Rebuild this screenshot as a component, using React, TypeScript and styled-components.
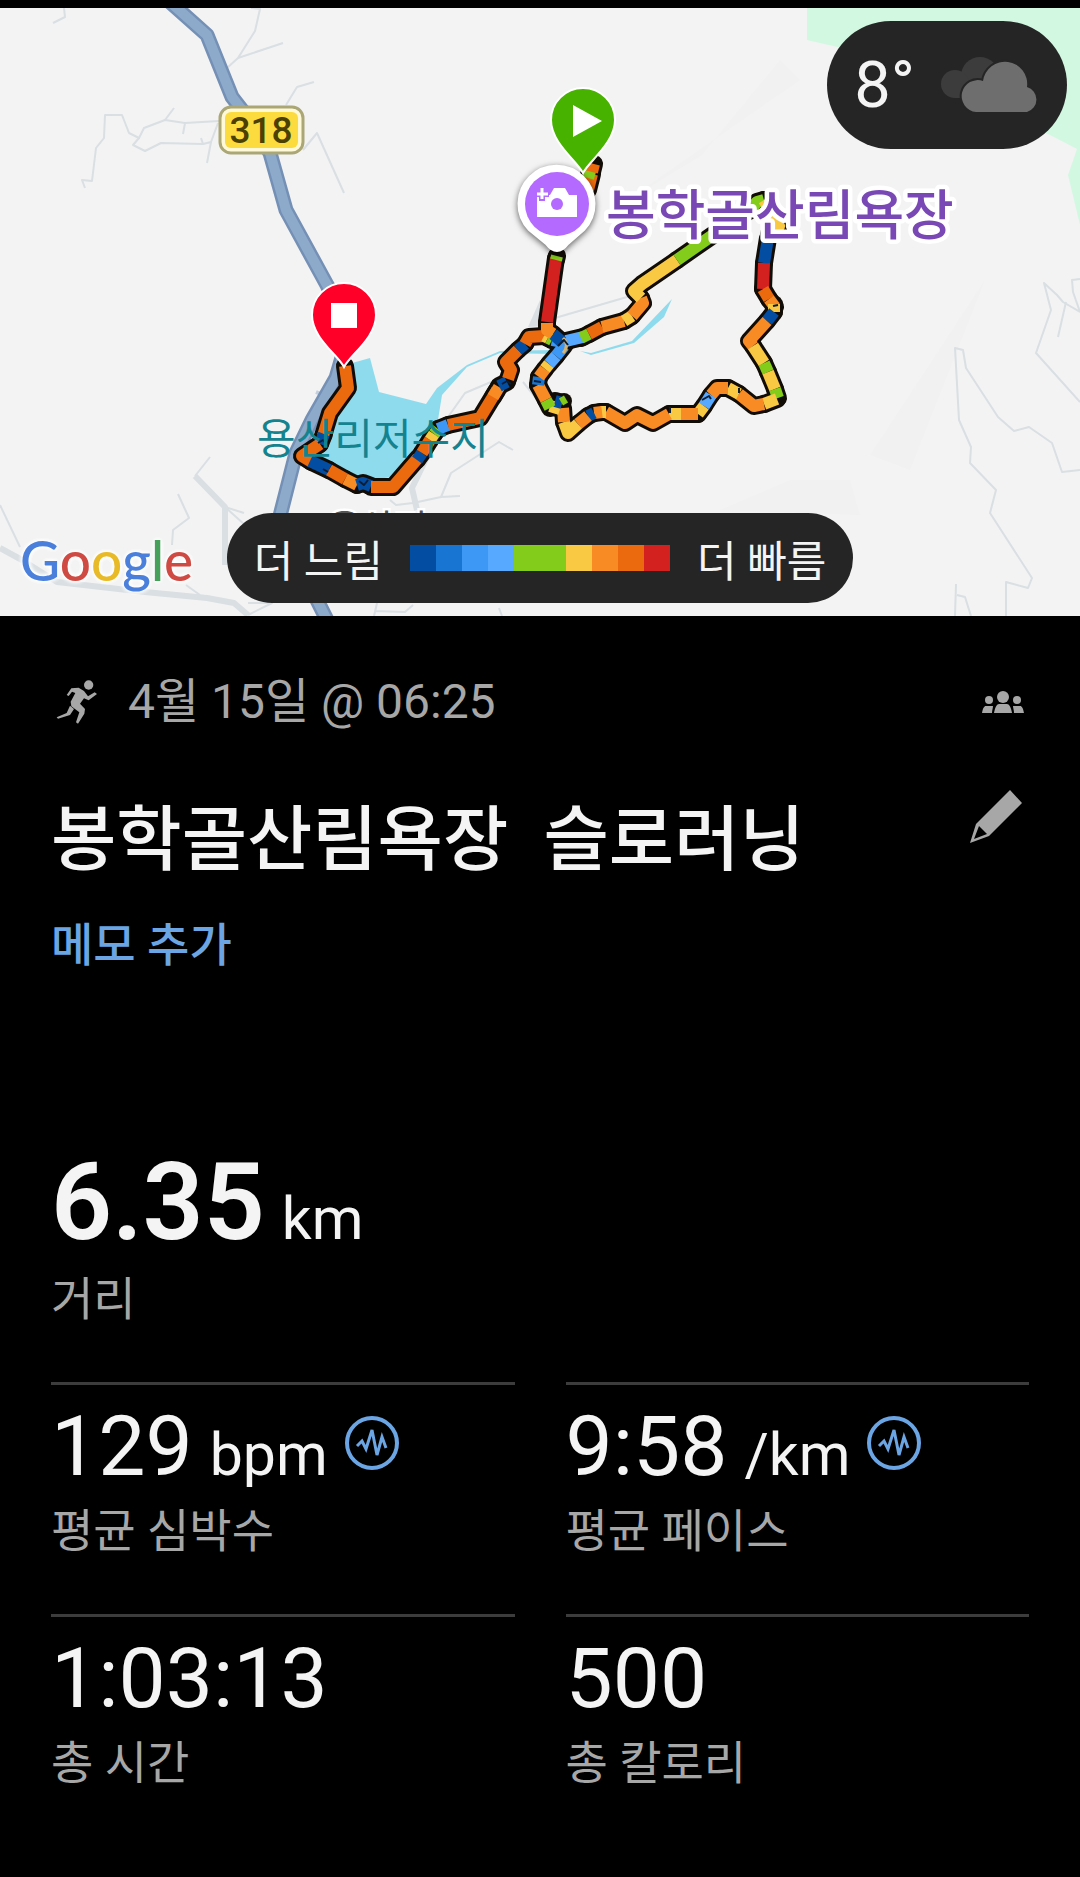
import React from 'react'
import styled, { createGlobalStyle } from 'styled-components'

type Point = [number, number]

interface IRoutePart {
  color: string
  points: Point[]
}

interface IStat {
  value: string
  unit?: string
  label: string
  chart?: boolean
}

const navy = '#034ea2'
const blue = '#1876d2'
const sky = '#3d97f5'
const light = '#57a9ff'
const green = '#84cc1c'
const yellow = '#fac943'
const orange = '#f98b24'
const deep = '#ec6a0e'
const red = '#d3211f'

const legendColors = [navy, blue, sky, light, green, green, yellow, orange, deep, red]

const stats: IStat[] = [
  { value: '129', unit: 'bpm', label: '평균 심박수', chart: true },
  { value: '9:58', unit: '/km', label: '평균 페이스', chart: true },
  { value: '1:03:13', label: '총 시간' },
  { value: '500', label: '총 칼로리' },
]

// small roads, thin
const lanes = [
  'M64 8L65 17L53 23',
  'M251 8L260 9L255 31L238 58L227 68',
  'M238 58L283 43',
  'M314 82L297 87L286 105',
  'M303 150L317 133L344 193',
  'M85 188L82 180L92 181L96 148L104 138L105 115L122 115L129 133L139 138L144 128L165 120L185 123L219 121',
  'M174 108L165 120',
  'M185 123L183 134',
  'M139 138L133 145L145 151L161 143L203 144L211 142',
  'M201 138L203 144',
  'M218 123L211 142L207 163',
  'M210 457L195 476',
  'M225 507L244 513',
  'M225 507L245 525',
  'M178 494L189 518L173 530L172 545',
  'M0 505L20 547',
  'M186 585L200 595',
  'M248 603L272 603L248 615',
  'M491 382L465 393L448 417',
  'M513 450L499 442L451 473L441 497L460 496',
  'M441 497L413 503L396 505L390 500',
  'M377 603L374 616M375 611L405 612L413 605',
  'M499 608L502 616',
  'M523 382L540 403',
  'M627 297L555 318',
  'M1080 470L1062 472L1052 443L1029 427L1014 431L998 417L966 368L963 350L955 348L959 420L971 447L970 463L996 490L990 513L1032 578L1028 588L1006 582L1006 616',
  'M956 584L955 616M957 595L965 597L971 616',
  'M1080 402L1036 353L1051 310L1044 283L1057 295L1063 302L1080 312',
  'M1080 279L1072 280L1073 292L1080 312',
  'M1058 337L1066 302',
]

// a bit wider ones
const streets = [
  'M195 476L225 507L225 565',
  'M0 548L22 560L57 582L145 592L207 598L234 603L248 615',
  'M427 457L412 488L417 510',
]

const highway = 'M170 2L207 35L232 97L256 128L270 153L286 210L327 285L350 330L336 378L312 420L296 453L280 516L302 570L328 622'

const route: IRoutePart[] = [
  { color: deep, points: [[345, 366], [348, 388], [330, 413], [323, 436]] },
  { color: navy, points: [[324, 434], [320, 444]] },
  { color: deep, points: [[320, 444], [302, 456], [312, 462]] },
  { color: navy, points: [[310, 461], [329, 470]] },
  { color: deep, points: [[329, 470], [345, 479]] },
  { color: orange, points: [[345, 479], [357, 485]] },
  { color: navy, points: [[357, 485], [363, 483], [371, 486]] },
  { color: deep, points: [[371, 487], [393, 487], [418, 458]] },
  { color: navy, points: [[417, 460], [422, 453]] },
  { color: deep, points: [[422, 453], [430, 440]] },
  { color: yellow, points: [[430, 440], [434, 434]] },
  { color: green, points: [[434, 434], [438, 429]] },
  { color: sky, points: [[438, 429], [448, 425]] },
  { color: deep, points: [[448, 425], [480, 418], [497, 390]] },
  { color: orange, points: [[493, 397], [499, 387]] },
  { color: navy, points: [[499, 386], [507, 382]] },
  { color: deep, points: [[508, 379], [511, 370], [506, 362], [518, 350]] },
  { color: navy, points: [[518, 350], [525, 344]] },
  { color: deep, points: [[525, 344], [529, 337], [544, 336]] },
  { color: yellow, points: [[544, 336], [548, 338]] },
  { color: green, points: [[548, 338], [552, 340]] },
  { color: sky, points: [[552, 340], [566, 343]] },
  { color: light, points: [[566, 341], [583, 337]] },
  { color: green, points: [[581, 338], [589, 334]] },
  { color: deep, points: [[589, 334], [602, 327]] },
  { color: orange, points: [[602, 327], [624, 321]] },
  { color: yellow, points: [[624, 321], [632, 316]] },
  { color: orange, points: [[632, 316], [643, 303], [641, 298]] },
  { color: yellow, points: [[641, 298], [634, 291], [642, 284], [677, 260]] },
  { color: green, points: [[677, 260], [713, 235], [750, 210], [757, 202], [764, 200]] },
  { color: yellow, points: [[764, 200], [772, 213], [779, 226], [769, 234]] },
  { color: navy, points: [[768, 238], [764, 263]] },
  { color: red, points: [[764, 263], [763, 289]] },
  { color: deep, points: [[763, 289], [769, 299]] },
  { color: orange, points: [[769, 299], [775, 307]] },
  { color: yellow, points: [[774, 304], [774, 312]] },
  { color: navy, points: [[774, 312], [767, 321]] },
  { color: orange, points: [[767, 321], [749, 341], [753, 346]] },
  { color: yellow, points: [[753, 346], [764, 363]] },
  { color: green, points: [[764, 363], [768, 372]] },
  { color: yellow, points: [[768, 372], [775, 389]] },
  { color: green, points: [[775, 389], [778, 398]] },
  { color: yellow, points: [[777, 399], [764, 404]] },
  { color: orange, points: [[764, 404], [754, 406], [739, 394]] },
  { color: yellow, points: [[739, 394], [728, 388]] },
  { color: orange, points: [[728, 388], [717, 388], [711, 395]] },
  { color: light, points: [[711, 395], [704, 406]] },
  { color: yellow, points: [[704, 406], [698, 414]] },
  { color: orange, points: [[698, 414], [681, 414]] },
  { color: yellow, points: [[681, 414], [669, 414]] },
  { color: orange, points: [[669, 414], [653, 423], [637, 415], [625, 423], [606, 412]] },
  { color: yellow, points: [[606, 412], [600, 412]] },
  { color: orange, points: [[602, 412], [594, 413]] },
  { color: navy, points: [[594, 413], [588, 416]] },
  { color: orange, points: [[588, 416], [578, 424]] },
  { color: yellow, points: [[578, 424], [568, 433], [564, 422]] },
  { color: orange, points: [[564, 422], [563, 408]] },
  { color: yellow, points: [[560, 409], [550, 406]] },
  { color: navy, points: [[555, 401], [562, 403]] },
  { color: green, points: [[550, 408], [546, 400]] },
  { color: orange, points: [[546, 400], [538, 385]] },
  { color: blue, points: [[538, 385], [539, 377]] },
  { color: orange, points: [[539, 377], [545, 369]] },
  { color: yellow, points: [[545, 369], [549, 364]] },
  { color: light, points: [[549, 364], [556, 356]] },
  { color: sky, points: [[556, 356], [564, 346]] },
  { color: navy, points: [[562, 342], [553, 334]] },
  { color: red, points: [[547, 322], [556, 258]] },
  { color: orange, points: [[553, 334], [547, 330], [547, 323]] },
  { color: green, points: [[556, 260], [557, 256]] },
  { color: deep, points: [[588, 190], [592, 174]] },
  { color: green, points: [[588, 178], [591, 168]] },
  { color: deep, points: [[592, 172], [594, 164]] },
]

// short dark ticks where the track doubles back on itself
const specks = [
  'M558 346l6 -6l4 5',
  'M534 381l7 1',
  'M702 400l7 -4l2 3',
  'M318 443l5 -3l3 4',
  'M359 481l5 4l4 -5',
  'M323 469l5 3',
  'M502 384l5 -3l4 3',
  'M773 306l5 -1',
  'M739 388v5',
  'M670 407v6',
]

const toPath = (points: Point[]) => 'M' + points.map((p) => p.join(' ')).join('L')

function MapDrawing() {
  return (
    <MapSvg viewBox="0 8 1080 608" preserveAspectRatio="xMidYMid slice" role="img" aria-label="318">
      <rect y="8" width="1080" height="608" fill="#f3f3f3" />
      <path d="M807 8V40L850 50L1050 135L1077 149L1068 175L1080 225V8Z" fill="#d3f8e2" />
      <path d="M702 155L780 60L800 80L620 205ZM870 455L985 280L910 470ZM720 510L790 480H850L860 515Z" fill="#f1f1f2" />

      <g fill="none" stroke="#d9dfe3" strokeLinejoin="round">
        {lanes.map((d) => (
          <path key={d} d={d} strokeWidth="2" />
        ))}
        {streets.map((d) => (
          <path key={d} d={d} strokeWidth="6" />
        ))}
      </g>
      <path d="M540 300L528 327L542 326Z" fill="#d9dfe3" />
      <path d="M316 392L330 398M322 402L334 392" stroke="#c3d0e0" strokeWidth="4" />

      <g fill="none" strokeLinejoin="round">
        <path d={highway} stroke="#7590b5" strokeWidth="15" />
        <path d={highway} stroke="#8eaacb" strokeWidth="10" />
      </g>

      <g fill="#8fdbee">
        <path d="M345 365L370 358L379 392L426 404L437 388L467 365L500 351L556 350L556 354L500 353L467 367L442 395L438 420L393 477L367 480L317 457L327 427L350 390Z" />
        <path d="M580 351L591 353L632 341L652 320L672 299L664 317L634 343L591 355Z" />
      </g>

      <g fill="none" strokeLinejoin="round" strokeLinecap="round">
        {route.map((part, i) => (
          <path key={i} d={toPath(part.points)} stroke="#120c06" strokeWidth="18" />
        ))}
        <path d="M562 403L564 401" stroke="#120c06" strokeWidth="16" />
      </g>
      <g fill="none" strokeLinejoin="round">
        {route.map((part, i) => (
          <path key={i} d={toPath(part.points)} stroke={part.color} strokeWidth="12" />
        ))}
        <path d="M561 402L566 399" stroke={green} strokeWidth="8" />
        <path d="M563 338Q570 345 563 353" stroke="#d9b36c" strokeWidth="3" />
        {specks.map((d) => (
          <path key={d} d={d} stroke="#0b1d33" strokeWidth="2" />
        ))}
      </g>

      <rect x="220" y="107" width="83" height="46" rx="11" fill="#fff9d8" stroke="#aaa676" strokeWidth="3" />
      <rect x="225" y="112" width="73" height="36" rx="6" fill="#fcdb3f" />
      <RoadText x="261" y="143" textAnchor="middle">318</RoadText>

      <LakeText x="257" y="454">용산리저수지</LakeText>
      <TownText x="328" y="541">용산리</TownText>
      <PlaceText x="606" y="235">봉학골산림욕장</PlaceText>

      <path
        d="M557 251C552 251 549 248 546 244L529 230A38 38 0 1 1 584 230L568 244C565 248 562 251 557 251Z"
        fill="#fff"
        stroke="#fff"
        strokeWidth="2"
        filter="drop-shadow(0 2px 3px #0009)"
      />
      <circle cx="557" cy="204" r="32" fill="#b469ff" />
      <path d="M537 195H550L554 188H565L569 195H577V217H537Z" fill="#fff" />
      <circle cx="557" cy="204" r="6" fill="#b469ff" />
      <path d="M542 187V201M535 194H549" stroke="#b469ff" strokeWidth="6" />
      <path d="M542 188V199M537 194H548" stroke="#fff" strokeWidth="3" />

      <g stroke="#fff" strokeWidth="2">
        <path d="M583 173C577 161 551 143 551 120A32 32 0 0 1 615 120C615 143 589 161 583 173Z" fill="#47b200" />
        <path d="M344 367C338 355 312 338 312 315A32 32 0 0 1 376 315C376 338 350 355 344 367Z" fill="#ff0029" />
      </g>
      <path d="M573 105V137L602 121Z" fill="#fff" />
      <rect x="331" y="303" width="26" height="25" fill="#fff" />
    </MapSvg>
  )
}

function CloudIcon() {
  return (
    <svg width="100" height="58" viewBox="0 0 100 58" aria-hidden="true">
      <g fill="#3c3c3c">
        <circle cx="40" cy="20" r="19" />
        <circle cx="15" cy="28" r="14" />
        <rect x="15" y="26" width="30" height="16" />
      </g>
      <path
        d="M36 56A16 16 0 1 1 43 25A22 22 0 0 1 87 31A13 13 0 0 1 87 56Z"
        fill="#6e6e6e"
        stroke="#252525"
        strokeWidth="4"
        paintOrder="stroke"
      />
    </svg>
  )
}

function RunnerIcon() {
  return (
    <svg width="42" height="44" viewBox="20 25 126 132" fill="#a7a7a7" aria-hidden="true">
      <circle cx="118" cy="40" r="14" />
      <path d="M52 70L66 50L88 48L104 58L116 74L136 62L143 67L118 86L104 80L92 96L107 112L105 126L86 156L80 152L90 122L66 104L64 90L78 64L68 60L58 73Z" />
      <path d="M62 102L74 112L62 130L26 141L22 137L52 124Z" />
    </svg>
  )
}

function GroupIcon() {
  return (
    <svg width="42" height="22" viewBox="0 0 42 22" fill="#a7a7a7" aria-hidden="true">
      <circle cx="21" cy="6" r="6" />
      <circle cx="7" cy="9" r="4" />
      <circle cx="35" cy="9" r="4" />
      <path d="M12 22C13 16 15 13 17 13H25C27 13 29 16 30 22Z" />
      <path d="M0 22C1 17 2 15 4 15H11C11 17 10 19 10 22ZM42 22C41 17 40 15 38 15H31C31 17 32 19 32 22Z" />
    </svg>
  )
}

function PencilIcon() {
  return (
    <svg width="53" height="53" viewBox="0 0 53 53" fill="#a7a7a7" fillRule="evenodd" aria-hidden="true">
      <path d="M40 0L52 13L19 46L0 53L6 34ZM9 36L4 49L17 44Z" />
    </svg>
  )
}

function PulseIcon() {
  return (
    <svg width="54" height="54" viewBox="0 0 54 54" fill="none" stroke="#6ba5e3" aria-hidden="true">
      <circle cx="27" cy="27" r="25" strokeWidth="4" />
      <path d="M12 30L17 25L21 33L27 14L32 39L37 21L41 32" strokeWidth="3" />
    </svg>
  )
}

function Stat({ item }: { item: IStat }) {
  return (
    <StatBox>
      <ValueRow>
        <Value>{item.value}</Value>
        {item.unit ? <Unit>{item.unit}</Unit> : null}
        {item.chart ? (
          <IconButton type="button" aria-label={item.label}>
            <PulseIcon />
          </IconButton>
        ) : null}
      </ValueRow>
      <Label>{item.label}</Label>
    </StatBox>
  )
}

function App() {
  return (
    <Page>
      <GlobalStyle />
      <MapBox>
        <MapDrawing />
        <Weather>
          8°
          <CloudIcon />
        </Weather>
        <Brand href="#google">
          <Letter $color="#4a80dc">G</Letter>
          <Letter $color="#cf4a42">o</Letter>
          <Letter $color="#e9ba28">o</Letter>
          <Letter $color="#4a80dc">g</Letter>
          <Letter $color="#46a05a">l</Letter>
          <Letter $color="#cf4a42">e</Letter>
        </Brand>
        <LegendHolder>
          <Legend>
            <span>더 느림</span>
            <Scale>
              {legendColors.map((color, i) => (
                <Swatch key={i} $color={color} />
              ))}
            </Scale>
            <span>더 빠름</span>
          </Legend>
        </LegendHolder>
      </MapBox>

      <Details>
        <DateRow>
          <RunnerIcon />
          <DateText>4월 15일 @ 06:25</DateText>
          <GroupIcon />
        </DateRow>
        <TitleRow>
          <Title>{'봉학골산림욕장  슬로러닝'}</Title>
          <IconButton type="button" aria-label="편집">
            <PencilIcon />
          </IconButton>
        </TitleRow>
        <MemoButton type="button">메모 추가</MemoButton>

        <Distance>
          <ValueRow>
            <BigValue>6.35</BigValue>
            <Unit>km</Unit>
          </ValueRow>
          <Label>거리</Label>
        </Distance>

        <Grid>
          {stats.map((item) => (
            <Stat key={item.label} item={item} />
          ))}
        </Grid>
      </Details>
    </Page>
  )
}

export default App

const GlobalStyle = createGlobalStyle`
  * {
    box-sizing: border-box;
  }
  body {
    margin: 0;
    background: #000;
    color: #f4f4f4;
    font-family: Roboto, "Noto Sans CJK KR", sans-serif;
  }
  button {
    border: 0;
    padding: 0;
    background: none;
    font-family: inherit;
    cursor: pointer;
  }
  svg {
    display: block;
    flex: none;
  }
`;

const Page = styled.main`
  min-height: 100vh;
  padding: 8px 0 80px;
`;

const MapBox = styled.section`
  position: relative;
  overflow: hidden;
`;

const MapSvg = styled.svg`
  width: 100%;
  height: 608px;
`;

const RoadText = styled.text`
  font-size: 37px;
  font-weight: 500;
  fill: #4a4000;
`;

const LakeText = styled.text`
  font-size: 42px;
  fill: #148390;
`;

const TownText = styled.text`
  font-size: 36px;
  fill: #555;
  stroke: #fff;
  stroke-width: 5px;
  paint-order: stroke;
`;

const PlaceText = styled.text`
  font-size: 54px;
  font-weight: 500;
  fill: #7a48b5;
  stroke: #fff;
  stroke-width: 9px;
  stroke-linejoin: round;
  paint-order: stroke;
`;

const Weather = styled.div`
  position: absolute;
  top: 13px;
  right: 13px;
  height: 128px;
  padding: 0 27px;
  border-radius: 64px;
  background: #252525;
  display: flex;
  align-items: center;
  gap: 25px;
  font-size: 65px;
`;

const Brand = styled.a`
  position: absolute;
  left: 20px;
  bottom: 22px;
  font-family: Lato, sans-serif;
  font-size: 55px;
  font-weight: 500;
  line-height: 68px;
  text-decoration: none;
  text-shadow: 0 0 5px #fff, 0 0 5px #fff, 0 0 5px #fff;
`;

const Letter = styled.span<{ $color: string }>`
  color: ${({ $color }) => $color};
`;

const LegendHolder = styled.div`
  position: absolute;
  left: 0;
  right: 0;
  bottom: 13px;
  display: flex;
  justify-content: center;
`;

const Legend = styled.div`
  height: 90px;
  padding: 0 27px;
  border-radius: 45px;
  background: #252525;
  display: flex;
  align-items: center;
  gap: 27px;
  font-size: 43px;
`;

const Scale = styled.div`
  display: flex;
`;

const Swatch = styled.i<{ $color: string }>`
  width: 26px;
  height: 26px;
  background: ${({ $color }) => $color};
`;

const Details = styled.section`
  padding: 56px 51px 0;
`;

const DateRow = styled.div`
  display: flex;
  align-items: center;
  gap: 30px;
  padding: 0 5px;
`;

const DateText = styled.time`
  flex: 1;
  font-size: 48px;
  line-height: 60px;
  color: #a7a7a7;
`;

const TitleRow = styled.div`
  display: flex;
  align-items: flex-start;
  justify-content: space-between;
  margin-top: 58px;
  padding-right: 6px;
`;

const Title = styled.h1`
  margin: 0;
  font-size: 71px;
  font-weight: 500;
  line-height: 100px;
  white-space: pre-wrap;
`;

const MemoButton = styled.button`
  display: block;
  margin-top: 27px;
  font-size: 46px;
  font-weight: 500;
  line-height: 56px;
  color: #6ba5e3;
`;

const Distance = styled.div`
  margin-top: 170px;
`;

const Grid = styled.div`
  display: grid;
  grid-template-columns: 1fr 1fr;
  gap: 55px 51px;
  margin-top: 55px;
`;

const StatBox = styled.div`
  border-top: 3px solid #3c3c3c;
  padding-top: 14px;
`;

const ValueRow = styled.div`
  display: flex;
  align-items: baseline;
  gap: 17px;
`;

const Value = styled.span`
  font-size: 84px;
  line-height: 96px;
`;

const BigValue = styled.strong`
  font-size: 107px;
  font-weight: 600;
  line-height: 120px;
`;

const Unit = styled.span`
  font-size: 59px;
  line-height: 64px;
`;

const IconButton = styled.button`
  display: flex;
  align-self: flex-start;

  ${ValueRow} & {
    margin-top: 17px;
  }
`;

const Label = styled.div`
  margin-top: 8px;
  font-size: 46px;
  line-height: 56px;
  color: #a7a7a7;
`;
